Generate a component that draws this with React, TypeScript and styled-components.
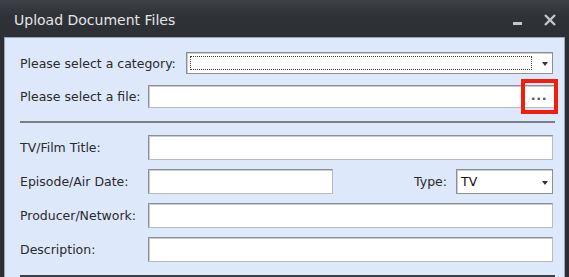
import React from 'react'
import styled, {createGlobalStyle} from "styled-components";

const GlobalStyle = createGlobalStyle`
    html, body {
        margin: 0;
        padding: 0;
        background: #2b2e33;
    }
    body {
        font-family: "DejaVu Sans", Verdana, sans-serif;
    }
`;

export default function App(){
    return(
        <>
            <GlobalStyle/>
            <Window>
                <TitleBar>
                    <Title>Upload Document Files</Title>
                    <WinButtons>
                        <svg width="12" height="12" viewBox="0 0 12 12">
                            <rect x="1" y="8" width="9" height="3" fill="#c4c6c9"/>
                        </svg>
                        <svg width="14" height="14" viewBox="0 0 14 14">
                            <path d="M2 2 L12 12 M12 2 L2 12" stroke="#c4c6c9" strokeWidth="2.4"/>
                        </svg>
                    </WinButtons>
                </TitleBar>
                <Body>
                    <Row>
                        <Label width={166}>Please select a category:</Label>
                        <SelectBox height={22}>
                            <Focus/>
                            <Arrow/>
                        </SelectBox>
                    </Row>
                    <Row>
                        <Label width={128}>Please select a file:</Label>
                        <FileBox>
                            <Browse>
                                <span>...</span>
                                <Highlight/>
                            </Browse>
                        </FileBox>
                    </Row>
                    <Separator/>
                    <Fields>
                        <Row>
                            <Label width={128}>TV/Film Title:</Label>
                            <TextBox/>
                        </Row>
                        <Row>
                            <Label width={128}>Episode/Air Date:</Label>
                            <TextBox width={185}/>
                            <TypeLabel>Type:</TypeLabel>
                            <SelectBox height={25}>
                                <SelectText>TV</SelectText>
                                <Arrow/>
                            </SelectBox>
                        </Row>
                        <Row>
                            <Label width={128}>Producer/Network:</Label>
                            <TextBox/>
                        </Row>
                        <Row>
                            <Label width={128}>Description:</Label>
                            <TextBox/>
                        </Row>
                    </Fields>
                    <Separator bottom/>
                </Body>
            </Window>
        </>
    )
}

const Window = styled.div`
    width: 569px;
    height: 277px;
    background: #2b2e33;
    display: flex;
    flex-direction: column;
    overflow: hidden;
`;

const TitleBar = styled.div`
    height: 37px;
    display: flex;
    align-items: center;
    justify-content: space-between;
    padding: 0 12px 0 14px;
    box-sizing: border-box;
    background: linear-gradient(#3e4146, #2f3237 40%, #2c2f34);
`;

const Title = styled.div`
    font-size: 14px;
    color: #e4e5e7;
    padding-top: 2px;
`;

const WinButtons = styled.div`
    display: flex;
    align-items: center;
    gap: 19px;
    padding-top: 3px;
`;

const Body = styled.div`
    flex: 1;
    margin: 0 4px;
    background: #dde9fb;
    border: 1px solid #9aa6b6;
    border-bottom: none;
    padding: 14px 11px 0 15px;
    display: flex;
    flex-direction: column;
    gap: 11px;
`;

const Fields = styled.div`
    display: flex;
    flex-direction: column;
    gap: 9px;
    margin-top: 1px;
`;

const Row = styled.div`
    display: flex;
    align-items: center;
`;

const Label = styled.div<{width: number}>`
    width: ${p => p.width}px;
    flex-shrink: 0;
    font-size: 12.5px;
    color: #2a2a2a;
    white-space: nowrap;
`;

const TypeLabel = styled.div`
    margin-left: auto;
    margin-right: 9px;
    font-size: 12.5px;
    color: #2a2a2a;
`;

const TextBox = styled.div<{width?: number}>`
    ${p => p.width ? `width: ${p.width}px;` : 'flex: 1;'}
    height: 25px;
    box-sizing: border-box;
    background: #fff;
    border: 1px solid #8d8f92;
    border-right-color: #b9bbbe;
    border-bottom-color: #b9bbbe;
    box-shadow: inset 1px 1px 0 #c9cbce;
`;

const SelectBox = styled.div<{height: number}>`
    flex: 1;
    height: ${p => p.height}px;
    max-width: ${p => p.height === 25 ? '97px' : 'none'};
    box-sizing: border-box;
    position: relative;
    display: flex;
    align-items: center;
    background: #fff;
    border: 1px solid #8d8f92;
    box-shadow: inset 1px 1px 0 #c9cbce;
`;

const Focus = styled.div`
    position: absolute;
    left: 3px;
    top: 3px;
    right: 20px;
    bottom: 3px;
    border: 1px dotted #444;
`;

const SelectText = styled.span`
    padding-left: 4px;
    font-size: 12.5px;
    color: #111;
`;

const Arrow = styled.div`
    position: absolute;
    right: 4px;
    top: 50%;
    margin-top: -1px;
    width: 0;
    height: 0;
    border-left: 3.5px solid transparent;
    border-right: 3.5px solid transparent;
    border-top: 4px solid #333;
`;

const FileBox = styled(TextBox)`
    height: 23px;
    position: relative;
    display: flex;
    justify-content: flex-end;
    margin-right: -2px;
`;

const Browse = styled.div`
    position: relative;
    width: 30px;
    display: flex;
    align-items: center;
    justify-content: center;
    font-size: 13px;
    font-weight: bold;
    letter-spacing: 0.5px;
    color: #555;
    span {
        margin-top: -3px;
    }
`;

const Highlight = styled.div`
    position: absolute;
    left: -3px;
    right: -4px;
    top: -7px;
    bottom: -7px;
    border: 4px solid #f41c0c;
`;

const Separator = styled.div<{bottom?: boolean}>`
    height: 2px;
    background: ${p => p.bottom ? '#3c3f44' : '#7b7e83'};
    margin-top: 2px;
    margin-right: -2px;
`;
